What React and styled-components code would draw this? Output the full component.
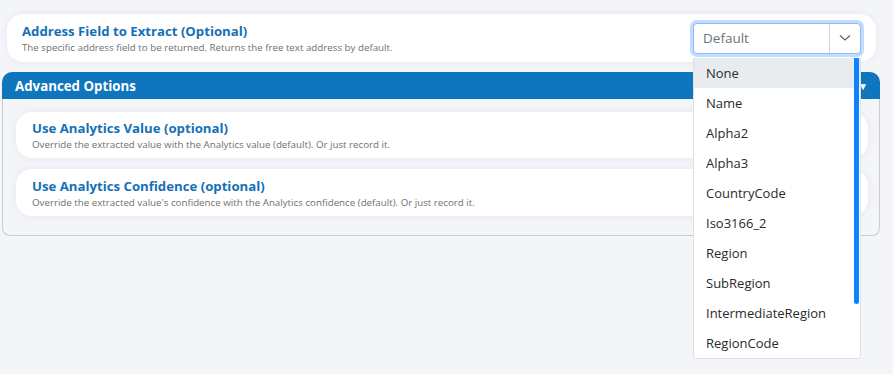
import React from 'react';
import styled, { createGlobalStyle } from 'styled-components';

const GlobalStyle = createGlobalStyle`
  body {
    margin: 0;
    background: #f4f5f9;
    font-family: "Open Sans", "Liberation Sans", sans-serif;
  }
`;

const Page = styled.div`
  width: 893px;
  height: 374px;
  overflow: hidden;
  padding-top: 14px;
  box-sizing: border-box;
`;

const Card = styled.div`
  display: flex;
  align-items: center;
  justify-content: space-between;
  height: ${(p) => p.h || 48}px;
  margin: ${(p) => p.m || '0'};
  padding: 0 15px 0 ${(p) => p.pl || 15}px;
  background: #fff;
  border-radius: 16px;
  box-shadow: 0 0 8px rgba(30, 40, 80, 0.06);
  box-sizing: border-box;
`;

const Info = styled.div`
  display: flex;
  flex-direction: column;
  gap: 1px;
`;

const Title = styled.div`
  color: #1570b6;
  font-weight: 700;
  font-size: 13.2px;
  line-height: 18px;
`;

const Desc = styled.div`
  color: #707070;
  font-size: 9.75px;
  line-height: 13px;
`;

const SelectWrap = styled.div`
  position: relative;
  width: 168px;
`;

const SelectBox = styled.div`
  display: flex;
  align-items: center;
  height: 31px;
  border: 1px solid #8fbaf9;
  border-radius: 4px;
  box-shadow: 0 0 0 3px rgba(13, 110, 253, 0.25);
  background: #fff;
  box-sizing: border-box;
`;

const SelectValue = styled.div`
  flex: 1;
  padding-left: 9px;
  color: #6c757d;
  font-size: 13.5px;
`;

const Arrow = styled.div`
  width: 30px;
  height: 100%;
  border-left: 1px solid #cfd4da;
  display: flex;
  align-items: center;
  justify-content: center;
`;

const Menu = styled.div`
  position: absolute;
  top: 35px;
  left: 0;
  width: 168px;
  background: #fff;
  border: 1px solid #dde1e5;
  border-top: none;
  border-radius: 0 0 4px 4px;
  z-index: 10;
  overflow: hidden;
  box-sizing: border-box;
`;

const Item = styled.div`
  height: 30px;
  line-height: 30px;
  padding-left: 12px;
  font-size: 13px;
  color: #2a2a2a;
  background: ${(p) => (p.active ? '#e9ecef' : '#fff')};
`;

const Thumb = styled.div`
  position: absolute;
  top: 0;
  right: 1px;
  width: 5px;
  height: 246px;
  background: #0a84ff;
  border-radius: 0 0 3px 3px;
`;

const Panel = styled.div`
  margin: 10px 13px 0 2px;
`;

const PanelHeader = styled.div`
  display: flex;
  align-items: center;
  justify-content: space-between;
  height: 27px;
  padding: 0 12px 0 13px;
  background: #0f75bc;
  border-radius: 10px 10px 0 0;
  color: #fff;
  font-weight: 700;
  font-size: 13.3px;
`;

const Caret = styled.span`
  font-size: 10px;
`;

const PanelBody = styled.div`
  display: flex;
  flex-direction: column;
  gap: 11px;
  padding: 13px 11px 19px 13px;
  border: 1px solid #c9cbd0;
  border-top: none;
  border-radius: 0 0 8px 8px;
`;

const options = [
  'None', 'Name', 'Alpha2', 'Alpha3', 'CountryCode', 'Iso3166_2',
  'Region', 'SubRegion', 'IntermediateRegion', 'RegionCode',
];

export default function App() {
  return (
    <Page>
      <GlobalStyle />
      <Card m="0 17px 0 7px">
        <Info>
          <Title>Address Field to Extract (Optional)</Title>
          <Desc>The specific address field to be returned. Returns the free text address by default.</Desc>
        </Info>
        <SelectWrap>
          <SelectBox>
            <SelectValue>Default</SelectValue>
            <Arrow>
              <svg width="12" height="8" viewBox="0 0 12 8">
                <path d="M1 1.5 L6 6 L11 1.5" fill="none" stroke="#5a6470" strokeWidth="1.3" />
              </svg>
            </Arrow>
          </SelectBox>
          <Menu>
            {options.map((o, i) => (
              <Item key={o} active={i === 0}>{o}</Item>
            ))}
            <Thumb />
          </Menu>
        </SelectWrap>
      </Card>
      <Panel>
        <PanelHeader>
          <span>Advanced Options</span>
          <Caret>▼</Caret>
        </PanelHeader>
        <PanelBody>
          <Card h={46} pl={16}>
            <Info>
              <Title>Use Analytics Value (optional)</Title>
              <Desc>Override the extracted value with the Analytics value (default). Or just record it.</Desc>
            </Info>
          </Card>
          <Card h={47} pl={16}>
            <Info>
              <Title>Use Analytics Confidence (optional)</Title>
              <Desc>Override the extracted value's confidence with the Analytics confidence (default). Or just record it.</Desc>
            </Info>
          </Card>
        </PanelBody>
      </Panel>
    </Page>
  );
}
